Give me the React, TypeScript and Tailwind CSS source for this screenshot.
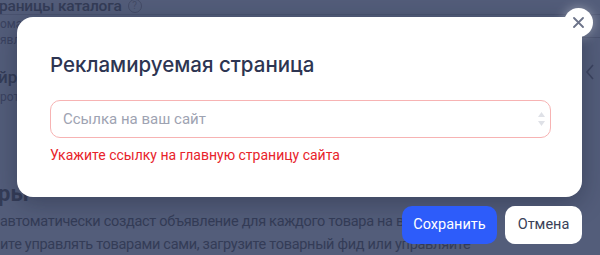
import React from "react";

export default function App() {
  const font = { fontFamily: "Roboto, 'Noto Sans', sans-serif" };
  return (
    <div
      className="relative w-[600px] h-[255px] overflow-hidden bg-[#535d7a] text-[#343c57]"
      style={font}
    >
      {/* background page (dimmed) */}
      <div className="flex flex-col">
        <div className="flex items-center h-[17px] gap-[6px] -mt-[3px]">
          <span className="text-[15.5px] font-medium leading-[20px] tracking-[-0.2px] -ml-[1px]">раницы каталога</span>
          <span className="w-[14px] h-[14px] rounded-full border border-[#444c67] text-[10px] leading-[12px] text-center text-[#444c67]">?</span>
        </div>
        <div className="h-px bg-[#4a5370]" />
        <div className="text-[12px] leading-[16px] text-[#3a4260] pt-[1px]">оматически</div>
        <div className="text-[12px] leading-[16px] text-[#3a4260]">явление</div>
        <div className="text-[17px] leading-[20px] pt-[19px] font-medium -ml-[2px]">йров</div>
        <div className="text-[12px] leading-[16px] text-[#3a4260] pt-[2px]">ротек</div>
        <div className="text-[22px] leading-[24px] font-bold pt-[77px] -ml-[2px]">ры</div>
        <div className="text-[14.5px] leading-[23px] tracking-[-0.3px] pt-[4px] whitespace-nowrap">автоматически создаст объявление для каждого товара на вашем сайте</div>
        <div className="text-[14.5px] leading-[23px] tracking-[-0.3px] whitespace-nowrap">ите управлять товарами сами, загрузите товарный фид или управляйте</div>
      </div>
      <div className="absolute right-0 top-0 w-[18px] h-full">
        <div className="h-[38px] border-b border-[#48516d]" />
        <svg className="ml-[3px] mt-[26px]" width="10" height="16" viewBox="0 0 10 16" fill="none">
          <path d="M8 1L2 8l6 7" stroke="#3c4460" strokeWidth="1.6" />
        </svg>
      </div>

      {/* modal */}
      <div className="absolute left-[17px] top-[17px] w-[565px] h-[180px] rounded-[16px] bg-white shadow-[0_6px_24px_rgba(20,25,45,0.35)] px-[33px] pt-[35px]">
        <div className="text-[20.5px] leading-[26px] font-medium text-[#2d3552]" style={{ fontFamily: "Inter, Roboto, sans-serif" }}>Рекламируемая страница</div>
        <div className="mt-[22px] h-[38px] w-[501px] rounded-[10px] border border-[#f7b3b3] flex items-center pl-[12px] pr-[4px]">
          <span className="text-[15px] text-[#9ea3b2] flex-1">Ссылка на ваш сайт</span>
          <svg width="9" height="22" viewBox="0 0 9 22">
            <path d="M1 9L4.5 4 8 9z" fill="#dfe1e7" />
            <path d="M1 13l3.5 5L8 13z" fill="#dfe1e7" />
          </svg>
        </div>
        <div className="mt-[8px] text-[14px] leading-[18px] text-[#e8232b]">Укажите ссылку на главную страницу сайта</div>
      </div>

      {/* close */}
      <div className="absolute left-[564px] top-[8px] w-[29px] h-[29px] rounded-full bg-white flex items-center justify-center shadow-[0_0_12px_rgba(255,255,255,0.4)]">
        <svg width="11" height="11" viewBox="0 0 11 11">
          <path d="M1 1l9 9M10 1l-9 9" stroke="#6c7389" strokeWidth="1.8" strokeLinecap="round" />
        </svg>
      </div>

      {/* buttons */}
      <div className="absolute left-[402px] top-[206px] flex gap-[8px]">
        <div className="h-[38px] w-[95px] rounded-[10px] bg-[#2d5cfa] text-white text-[14.5px] flex items-center justify-center">Сохранить</div>
        <div className="h-[38px] w-[77px] rounded-[10px] bg-white text-[#3a4158] text-[14.5px] flex items-center justify-center">Отмена</div>
      </div>
    </div>
  );
}
